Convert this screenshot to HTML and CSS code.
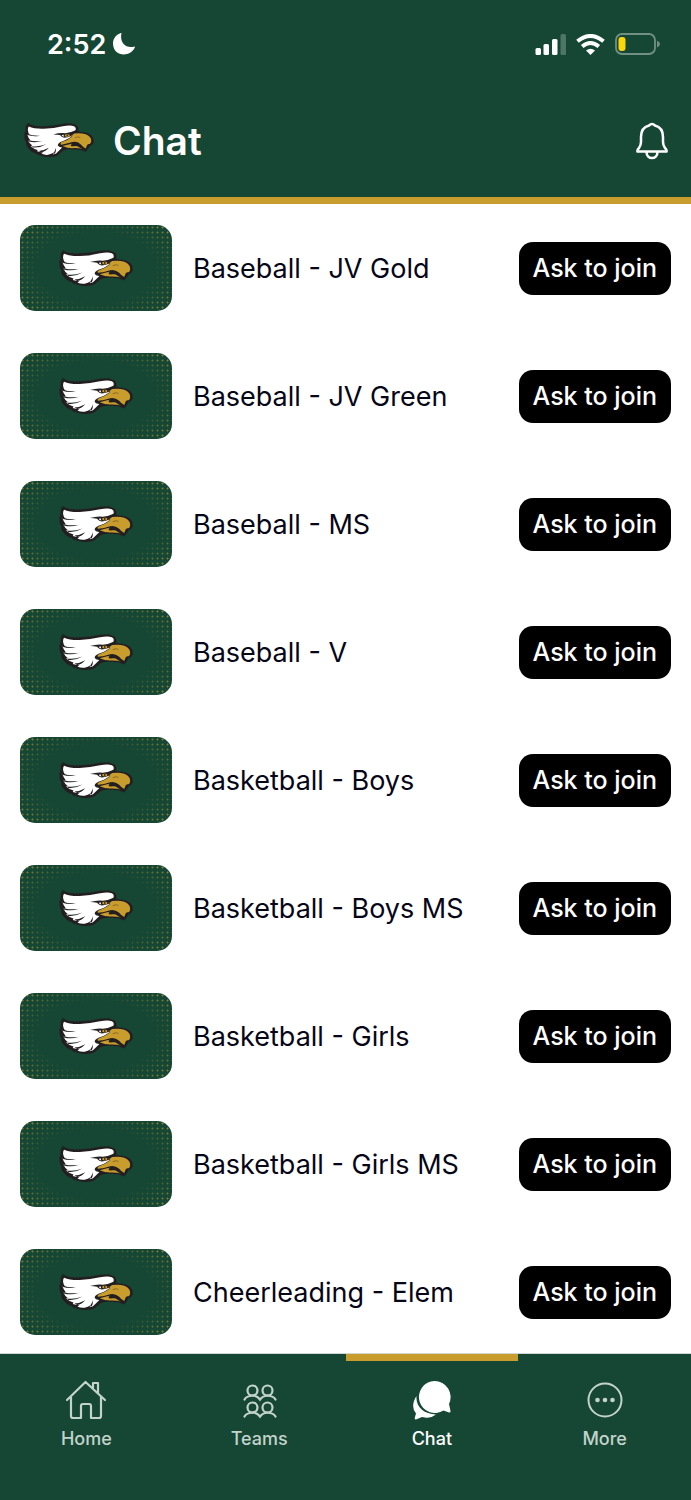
FILE: index.html
```
<!DOCTYPE html>
<html lang="en">
<head>
<meta charset="utf-8">
<meta name="viewport" content="width=device-width, initial-scale=1">
<title>Chat</title>
<link rel="stylesheet" href="styles.css">
</head>
<body>
<svg class="defs" aria-hidden="true">
  <symbol id="eagle" viewBox="0 0 220 110">
    <path fill="#231f20" d="M11 1Q14 -1 20 5Q34 11 60 10Q92 9 118 3Q142-2 160 5Q173 10 170 22Q170 26 176 28Q200 27 212 39Q222 50 218 64Q214 71 207 72Q203 79 197 87Q192 92 187 88Q173 82 154 83Q137 82 125 86Q116 93 106 102Q98 107 86 106Q67 109 52 102Q43 102 36 95Q20 91 14 79Q5 73 7 61Q0 53 2 41Q-1 33 5 25Q3 8 11 1Z"/>
    <path fill="#fff" d="M15 11Q32 19 62 18Q94 17 122 10Q146 5 157 10Q165 14 162 23Q160 28 150 31L149 42Q139 52 119 58Q106 63 106 71Q111 77 120 77Q109 88 101 96L91 99L94 93Q86 98 76 100Q65 101 55 97L60 93Q50 92 41 89L43 85Q31 82 21 73L26 71Q17 65 13 56L20 54Q13 46 10 36L17 36Q13 31 12 22Q12 15 15 11Z"/>
    <g fill="#231f20">
      <path d="M10 34Q28 41 50 40Q30 44 10 38Z"/>
      <path d="M14 54Q36 60 60 56Q38 64 14 58Z"/>
      <path d="M24 73Q46 76 70 67Q50 79 28 77Z"/>
      <path d="M46 88Q62 87 78 78Q68 90 54 92Z"/>
      <path d="M92 96Q98 88 100 78Q102 89 97 96Z"/>
      <path d="M92 36Q112 30 130 32Q148 30 164 22Q166 29 158 33Q150 35 148 41Q138 46 126 46Q118 45 113 38Q105 36 92 36Z"/>
    </g>
    <path fill="#fff" d="M118 38L125 37Q123 41 127 43Q120 43 118 38Z"/>
    <ellipse cx="136" cy="39" rx="8" ry="4" fill="#c99c2e"/>
    <circle cx="136" cy="38.500" r="2.500" fill="#231f20"/>
    <path fill="#c99c2e" d="M158 33Q177 30 194 35Q208 41 211 51Q213 62 207 66Q201 65 198 70L194 80Q185 76 178 67Q167 57 152 60Q133 66 117 68Q111 65 119 60Q139 54 150 43Q151 36 158 33Z"/>
    <path fill="#c99c2e" d="M121 72Q138 68 151 65Q142 73 154 73Q167 70 173 76Q178 80 184 82Q170 78 152 79Q136 79 121 72Z"/>
    <path d="M160 47Q168 41 177 46" fill="none" stroke="#6d5420" stroke-width="2"/>
  </symbol>
</svg>
<div class="app">
  <header class="header">
    <div class="status">
      <div class="clock"><span>2:52</span>
        <svg width="22" height="22" viewBox="0 0 22 22"><path fill="#fff" d="M8.500 0C6.500 9 12 16 21.500 13.500C22 13.500 22 14 21.800 14.500C17 25 0 23.500 0 10.500C0 5 3.500 1.500 7.800 0Q8.500-.2 8.500 0Z"/></svg>
      </div>
      <div class="signals">
        <svg width="31" height="21" viewBox="0 0 31 21" fill="#fff"><rect x=".5" y="14" width="5.500" height="7" rx="1.500"/><rect x="8.500" y="10" width="5.500" height="11" rx="1.500"/><rect x="17" y="5" width="5.500" height="16" rx="1.500"/><rect x="25.500" width="5.500" height="21" rx="1.500" opacity=".25"/></svg>
        <svg width="29" height="21" viewBox="0 0 29 21"><g fill="none" stroke="#fff" stroke-width="4"><path d="M1.500 7.300Q14.500-3.300 27.500 7.300"/><path d="M6.200 12.500Q14.500 5.500 22.800 12.500"/></g><path fill="#fff" d="M10 16.500Q14.500 12.800 19 16.500L14.500 21Z"/></svg>
        <svg width="45" height="22" viewBox="0 0 45 22"><rect x="1" y="1" width="39" height="20" rx="6" fill="none" stroke="#728f83" stroke-width="1.800"/><path fill="#728f83" d="M42 7.500Q45 9 45 11T42 14.500Z"/><rect x="3.500" y="4" width="7" height="14" rx="3" fill="#fdd60a"/></svg>
      </div>
    </div>
    <div class="titlebar">
      <svg class="logo" viewBox="0 0 220 110"><use href="#eagle"/></svg>
      <h1>Chat</h1>
      <button class="bell" aria-label="Notifications">
        <svg width="32" height="38" viewBox="0 0 32 38" fill="none" stroke="#fff" stroke-width="2.500" stroke-linejoin="round"><path d="M13 3.500Q16 .5 19 3.500C25 5 27 10 27 15V20Q27 23 29 26Q31 28 30.500 29.500H1.500Q1 28 3 26Q5 23 5 20V15C5 10 7 5 13 3.500Z"/><path d="M10.500 30C10.500 38 21.500 38 21.500 30"/></svg>
      </button>
    </div>
  </header>
  <main class="list">
    <article class="row"><div class="card"><svg class="logo" viewBox="0 0 220 110"><use href="#eagle"/></svg></div><h2>Baseball - JV Gold</h2><button class="join">Ask to join</button></article>
    <article class="row"><div class="card"><svg class="logo" viewBox="0 0 220 110"><use href="#eagle"/></svg></div><h2>Baseball - JV Green</h2><button class="join">Ask to join</button></article>
    <article class="row"><div class="card"><svg class="logo" viewBox="0 0 220 110"><use href="#eagle"/></svg></div><h2>Baseball - MS</h2><button class="join">Ask to join</button></article>
    <article class="row"><div class="card"><svg class="logo" viewBox="0 0 220 110"><use href="#eagle"/></svg></div><h2>Baseball - V</h2><button class="join">Ask to join</button></article>
    <article class="row"><div class="card"><svg class="logo" viewBox="0 0 220 110"><use href="#eagle"/></svg></div><h2>Basketball - Boys</h2><button class="join">Ask to join</button></article>
    <article class="row"><div class="card"><svg class="logo" viewBox="0 0 220 110"><use href="#eagle"/></svg></div><h2>Basketball - Boys MS</h2><button class="join">Ask to join</button></article>
    <article class="row"><div class="card"><svg class="logo" viewBox="0 0 220 110"><use href="#eagle"/></svg></div><h2>Basketball - Girls</h2><button class="join">Ask to join</button></article>
    <article class="row"><div class="card"><svg class="logo" viewBox="0 0 220 110"><use href="#eagle"/></svg></div><h2>Basketball - Girls MS</h2><button class="join">Ask to join</button></article>
    <article class="row"><div class="card"><svg class="logo" viewBox="0 0 220 110"><use href="#eagle"/></svg></div><h2>Cheerleading - Elem</h2><button class="join">Ask to join</button></article>
  </main>
  <nav class="tabs">
    <a href="#home"><svg width="40" height="40" viewBox="0 0 40 40" fill="none" stroke="currentColor" stroke-width="2.200" stroke-linejoin="round" stroke-linecap="round"><path d="M1 20L19.500 2L39 20M5 17V36Q5 38 7 38H15V26Q15 24 17 24H23Q25 24 25 26V38H33Q35 38 35 36V17M27 9V3H32V13"/></svg>Home</a>
    <a href="#teams"><svg width="40" height="40" viewBox="0 0 40 40" fill="none" stroke="currentColor" stroke-width="2.200" stroke-linecap="round"><circle cx="13.500" cy="10.500" r="5"/><circle cx="28.500" cy="10.500" r="5"/><circle cx="13.500" cy="27.500" r="5"/><circle cx="28.500" cy="27.500" r="5"/><path d="M5.500 19.500Q7.500 16 13.500 15.500Q18.500 16 21 19.500Q23.500 16 28.500 15.500Q34.500 16 36.500 19.500M5.500 36.500Q7.500 33 13.500 32.500Q18.500 33 21 36.500Q23.500 33 28.500 32.500Q34.500 33 36.500 36.500"/></svg>Teams</a>
    <a href="#chat" class="active" aria-current="page"><svg width="40" height="40" viewBox="0 0 40 40" fill="currentColor"><path d="M4.500 16C3.500 27 12 34 24 34.500Q19 38.500 13 37.500L10 37L4 39.500Q2.500 39.500 2.700 38L4 33.500Q-.5 28 2 21Q3 18 4.500 16Z"/><path d="M22.500 1A16 16 0 0 1 37 24L38.500 31Q38.500 33 37 32.500L31.500 30.500A16 16 0 1 1 22.500 1Z"/></svg>Chat</a>
    <a href="#more"><svg width="40" height="40" viewBox="0 0 40 40"><circle cx="20" cy="20" r="16.500" fill="none" stroke="currentColor" stroke-width="2"/><g fill="currentColor"><circle cx="12.500" cy="20" r="2.300"/><circle cx="20" cy="20" r="2.300"/><circle cx="27.500" cy="20" r="2.300"/></g></svg>More</a>
  </nav>
</div>
</body>
</html>
```
FILE: styles.css
```
:root {
  --green: #154734;
  --gold: #c99c2e;
}
* { box-sizing: border-box; }
body {
  margin: 0;
  font-family: Inter, "Liberation Sans", sans-serif;
  background: #fff;
}
button { border: 0; font: inherit; cursor: pointer; }
svg { display: block; flex: none; }
.defs { position: absolute; width: 0; height: 0; }
.app {
  display: flex;
  flex-direction: column;
  height: 100vh;
}
.header {
  flex: none;
  background: var(--green);
  border-bottom: 7px solid var(--gold);
  color: #fff;
}
.status {
  display: flex;
  justify-content: space-between;
  align-items: center;
  height: 88px;
  padding: 0 31px 0 47px;
}
.clock {
  display: flex;
  align-items: center;
  gap: 7px;
  font-size: 27px;
  font-weight: 600;
}
.signals {
  display: flex;
  align-items: center;
  gap: 10px;
}
.titlebar {
  display: flex;
  align-items: center;
  height: 109px;
  padding: 0 23px 4px 24px;
}
.titlebar .logo { width: 70px; }
.titlebar h1 {
  flex: 1;
  margin: 0 0 0 19px;
  font-size: 39px;
  font-weight: 600;
}
.bell { padding: 0; background: none; }
.list {
  flex: 1;
  min-height: 0;
  overflow-y: auto;
  scrollbar-width: none;
}
.row {
  display: flex;
  align-items: center;
  gap: 21px;
  height: 128px;
  padding: 0 20px;
}
.card {
  display: grid;
  flex: none;
  width: 152px;
  height: 86px;
  border-radius: 15px;
  background: var(--green);
  overflow: hidden;
}
.card::before {
  content: "";
  grid-area: 1 / 1;
  background: radial-gradient(circle, #a99436 0, #a99436 20%, transparent 38%) 0 0 / 5px 5px;
  mask-image: radial-gradient(ellipse 82px 50px, transparent 70%, #000 130%);
}
.card .logo {
  grid-area: 1 / 1;
  place-self: center;
  width: 74px;
}
.row h2 {
  flex: 1;
  margin: 0;
  font-size: 27px;
  font-weight: 400;
  color: #060617;
}
.join {
  flex: none;
  height: 53px;
  padding: 0 14px;
  border-radius: 14px;
  background: #000;
  color: #fff;
  font-size: 25px;
  font-weight: 500;
}
.tabs {
  flex: none;
  display: grid;
  grid-template-columns: repeat(4, 1fr);
  height: 147px;
  border-top: 1px solid #cfd6d3;
  background: var(--green);
}
.tabs a {
  display: flex;
  flex-direction: column;
  align-items: center;
  gap: 7px;
  padding-top: 19px;
  border-top: 7px solid transparent;
  color: #c3d3cb;
  font-size: 18px;
  font-weight: 500;
  line-height: 24px;
  text-decoration: none;
}
.tabs .active {
  border-color: var(--gold);
  color: #fff;
}
```
